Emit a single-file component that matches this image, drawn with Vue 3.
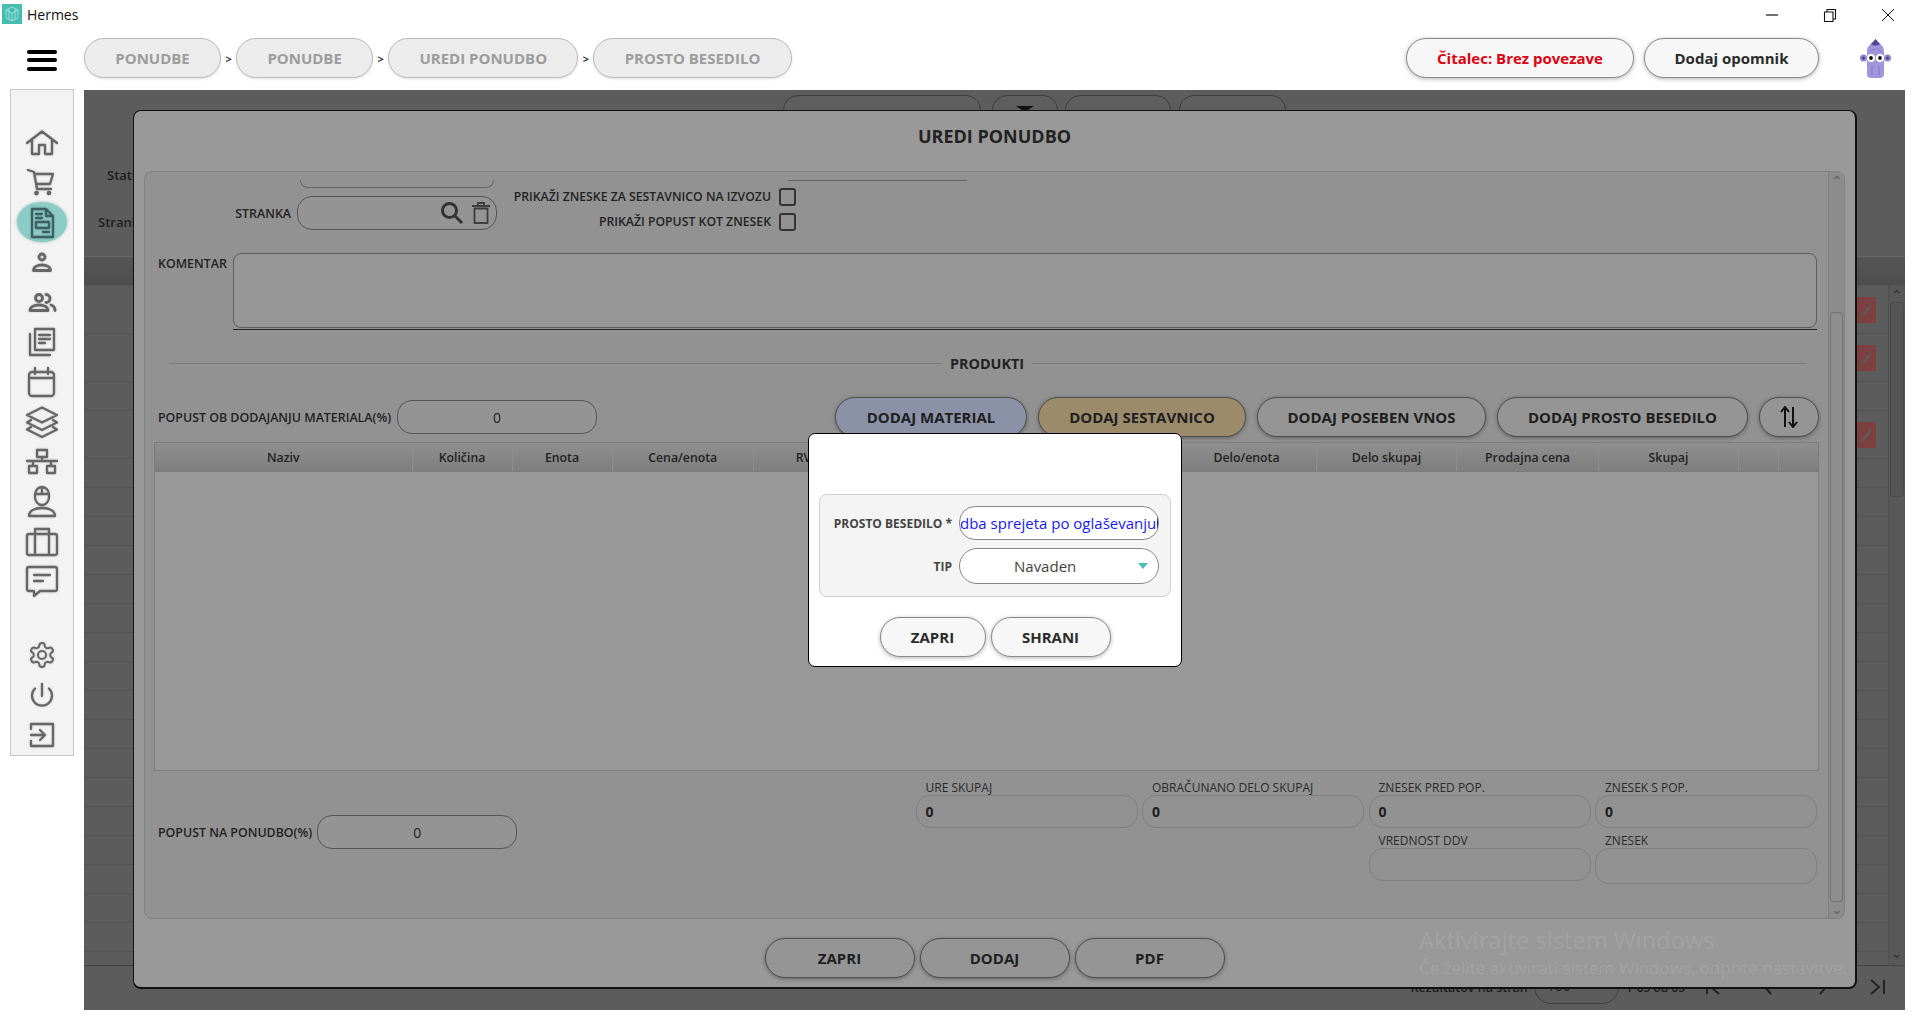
<script setup>
const c = (x, y, r) => `M${x - r} ${y}a${r} ${r} 0 1 0 ${2 * r} 0a${r} ${r} 0 1 0 ${-2 * r} 0z`
const gear = 'M12.22 2h-.44a2 2 0 0 0-2 2v.18a2 2 0 0 1-1 1.73l-.43.25a2 2 0 0 1-2 0l-.15-.08a2 2 0 0 0-2.73.73l-.22.38a2 2 0 0 0 .73 2.73l.15.1a2 2 0 0 1 1 1.72v.51a2 2 0 0 1-1 1.74l-.15.09a2 2 0 0 0-.73 2.73l.22.38a2 2 0 0 0 2.73.73l.15-.08a2 2 0 0 1 2 0l.43.25a2 2 0 0 1 1 1.73V20a2 2 0 0 0 2 2h.44a2 2 0 0 0 2-2v-.18a2 2 0 0 1 1-1.73l.43-.25a2 2 0 0 1 2 0l.15.08a2 2 0 0 0 2.73-.73l.22-.39a2 2 0 0 0-.73-2.73l-.15-.08a2 2 0 0 1-1-1.74v-.5a2 2 0 0 1 1-1.74l.15-.09a2 2 0 0 0 .73-2.73l-.22-.38a2 2 0 0 0-2.73-.73l-.15.08a2 2 0 0 1-2 0l-.43-.25a2 2 0 0 1-1-1.73V4a2 2 0 0 0-2-2z' + c(12, 12, 3.4)

const navTop = [
  { name: 'home', d: 'M10 21 25 9.5 40 21M15 18v14h7v-9h6v9h7V18' },
  { name: 'cart', d: 'M11 8l6 2 3 17h14M17.5 12H36l-3 10H19.5' + c(19.5, 31, 1.2) + c(32, 31, 1.2) },
  { name: 'doc', active: true, d: 'M15 7h14l7 7v21H15zM29 7v7h7M19 12h6M19 16h6M19 20h13v6H19zM26 30h6' },
  { name: 'user', heavy: true, d: c(25, 15, 3) + 'M16.500 28.500c0-3.500 4-5.500 8.500-5.500s8.500 2 8.500 5.500z' },
  { name: 'users', heavy: true, d: c(22, 16, 3.5) + 'M29 12.500a4 4 0 0 1 0 8M13 28.500c0-3.500 4-5.500 9-5.500s9 2 9 5.500zM34 23c2.600.8 4 3 4 5.500' },
  { name: 'docs', d: 'M18 7h19v21H18zM22 13h11M22 17h11M22 21h6M13 12v21h20' },
  { name: 'calendar', d: 'M15 10h19a3 3 0 0 1 3 3v18a3 3 0 0 1-3 3H15a3 3 0 0 1-3-3V13a3 3 0 0 1 3-3zM12 16h25M18 6v6M31 6v6' },
  { name: 'layers', d: 'M10 13 25 5.500 40 13l-15 7.500zM14 18l-4 2.500 15 7.500 15-7.500-4-2.500M14 25l-4 2.500 15 7.500 15-7.500-4-2.500' },
  { name: 'network', d: 'M20 8h10v7H20zM25 15v4M10 19h30M16 19v5M34 19v5M12 24h8v7h-8zM30 24h8v7h-8z' },
  { name: 'worker', d: 'M18 13a7 8 0 0 1 14 0v2a7 8 0 0 1-14 0zM18 12h14M25 5v7M12 34c0-5 5-8 13-8s13 3 13 8z' },
  { name: 'case', d: 'M12 12h26a2 2 0 0 1 2 2v17a2 2 0 0 1-2 2H12a2 2 0 0 1-2-2V14a2 2 0 0 1 2-2zM18 12V7h14v5M18 12v21M32 12v21' },
  { name: 'chat', d: 'M12 5h26a2 2 0 0 1 2 2v20a2 2 0 0 1-2 2H23l-6 5v-5h-5a2 2 0 0 1-2-2V7a2 2 0 0 1 2-2zM17 13h16M17 19h9' },
]
const navBottom = [
  { name: 'gear', d: gear, shift: true },
  { name: 'power', d: 'M25 9v12M18 13.500a10 10 0 1 0 14 0' },
  { name: 'exit', d: 'M14 14V9h22v22H14v-5M14 20h14M23 15l5 5-5 5' },
]

const crumbs = ['PONUDBE', 'PONUDBE', 'UREDI PONUDBO', 'PROSTO BESEDILO']
const bgRows = [48, 48, 29, 48, ...Array(18).fill(29)]
const editRows = [0, 1, 3]
const columns = [
  { t: 'Naziv', w: 257.5 }, { t: 'Količina', w: 100 }, { t: 'Enota', w: 100 }, { t: 'Cena/enota', w: 141.5 },
  { t: 'RV', w: 100 }, { t: '', w: 163 }, { t: '', w: 160 }, { t: 'Delo/enota', w: 140 },
  { t: 'Delo skupaj', w: 140 }, { t: 'Prodajna cena', w: 142 }, { t: 'Skupaj', w: 140 }, { t: '', w: 40 }, { t: '', w: 41 },
]
const totals = [
  { label: 'URE SKUPAJ', value: '0' }, { label: 'OBRAČUNANO DELO SKUPAJ', value: '0' },
  { label: 'ZNESEK PRED POP.', value: '0' }, { label: 'ZNESEK S POP.', value: '0' },
  { label: '', value: null }, { label: '', value: null },
  { label: 'VREDNOST DDV', value: '' }, { label: 'ZNESEK', value: '' },
]
</script>

<template>
  <div class="app">
    <header class="titlebar">
      <svg class="app-icon" viewBox="0 0 20 20">
        <rect width="20" height="20" fill="#45bdb3" />
        <path d="M10 3l6 3v8l-6 3-6-3V6zM4 6l6 3 6-3M10 9v8M7 5v10M13 5v10" fill="none" stroke="#a8e2dc" stroke-width=".9" />
      </svg>
      <span class="app-name">Hermes</span>
      <div class="win-controls">
        <span class="win-btn"><svg width="14" height="14" viewBox="0 0 14 14"><path d="M1 7h12" stroke="#111" stroke-width="1.200" /></svg></span>
        <span class="win-btn"><svg width="14" height="14" viewBox="0 0 14 14"><path d="M1.500 4h8.500v9.500H1.500zM4 4V1.500h8.500V11H10" fill="none" stroke="#111" stroke-width="1.100" /></svg></span>
        <span class="win-btn"><svg width="14" height="14" viewBox="0 0 14 14"><path d="M1 1l12 12M13 1 1 13" stroke="#111" stroke-width="1" /></svg></span>
      </div>
    </header>

    <div class="topbar">
      <div class="hamburger"><i></i><i></i><i></i></div>
      <nav class="crumbs">
        <template v-for="(item, i) in crumbs" :key="i">
          <span v-if="i" class="crumb-sep">&gt;</span>
          <span class="crumb">{{ item }}</span>
        </template>
      </nav>
      <div class="top-actions">
        <button class="pill reader">Čitalec: Brez povezave</button>
        <button class="pill reminder">Dodaj opomnik</button>
        <svg class="mascot" viewBox="0 0 33 40">
          <circle cx="3.500" cy="20" r="3.500" fill="#8d80cc" />
          <circle cx="27.500" cy="20" r="3.500" fill="#8d80cc" />
          <circle cx="3.500" cy="20" r="1.200" fill="#3e3470" />
          <circle cx="27.500" cy="20" r="1.200" fill="#3e3470" />
          <path d="M7 13C7 8 12 5 15.500 1 19 5 24 8 24 13v23a4 4 0 0 1-4 4h-9a4 4 0 0 1-4-4z" fill="#a195dc" />
          <path d="M11 6.500 15.500 1 20 6.500c-3 1.500-6 1.500-9 0z" fill="#564a96" />
          <path d="M10 13l5-2M17 10l4 4M12 28v9M19 28v9" stroke="#7d70bd" stroke-width=".8" fill="none" />
          <circle cx="11" cy="20" r="4" fill="#fff" />
          <circle cx="20" cy="20" r="4" fill="#fff" />
          <circle cx="11" cy="20" r="1.900" fill="#111" />
          <circle cx="20" cy="20" r="1.900" fill="#111" />
        </svg>
      </div>
    </div>

    <div class="workspace">
      <aside class="sidebar">
        <div class="nav-group">
          <div v-for="icon in navTop" :key="icon.name" class="nav-item" :class="{ active: icon.active, heavy: icon.heavy }">
            <svg viewBox="0 0 50 40" width="50" height="40"><path :d="icon.d" /></svg>
          </div>
        </div>
        <div class="nav-group bottom">
          <div v-for="icon in navBottom" :key="icon.name" class="nav-item">
            <svg viewBox="0 0 50 40" width="50" height="40"><path :d="icon.d" :class="{ gear: icon.shift }" /></svg>
          </div>
        </div>
      </aside>

      <main class="page">
        <div class="bg-filters">
          <div class="bg-buttons">
            <span class="bg-btn w-search"></span>
            <span class="bg-btn w-tri"><i></i></span>
            <span class="bg-btn w-a"></span>
            <span class="bg-btn w-b"></span>
          </div>
          <div class="bg-label first">Status</div>
          <div class="bg-label second">Stranka</div>
        </div>
        <div class="bg-table">
          <div class="bg-head"></div>
          <div class="bg-body">
            <div class="bg-rows">
              <div v-for="(h, i) in bgRows" :key="i" class="bg-row" :style="{ height: h + 'px' }">
                <span v-if="editRows.includes(i)" class="bg-edit">
                  <svg width="20" height="26" viewBox="0 0 20 26"><path d="M6 17l8-10 2 2-8 10-3 1z" fill="#5c5c5c" opacity=".8" /></svg>
                </span>
              </div>
            </div>
            <div class="bg-scroll">
              <span class="arrow">⌃</span>
              <span class="bg-thumb"></span>
              <span class="arrow down">⌄</span>
            </div>
          </div>
        </div>
        <div class="bg-footer">
          <span class="bg-text">Rezultatov na stran</span>
          <span class="bg-select">100<i></i></span>
          <span class="bg-text pages">1-65 od 65</span>
          <span class="bg-nav"><svg width="16" height="16" viewBox="0 0 16 16"><path d="M2 1v14M14 1 6 8l8 7" /></svg></span>
          <span class="bg-nav"><svg width="10" height="16" viewBox="0 0 10 16"><path d="M8 1 2 8l6 7" /></svg></span>
          <span class="bg-nav"><svg width="10" height="16" viewBox="0 0 10 16"><path d="M2 1l6 7-6 7" /></svg></span>
          <span class="bg-nav"><svg width="16" height="16" viewBox="0 0 16 16"><path d="M1 1l8 7-8 7M14 1v14" /></svg></span>
        </div>

        <section class="modal-edit">
          <h2 class="modal-title">UREDI PONUDBO</h2>
          <div class="panel">
            <div class="panel-body">
              <div class="stub-row"><span class="stub"></span><span class="stub-line"></span></div>
              <div class="customer-row">
                <div class="customer">
                  <label class="lbl customer-lbl">STRANKA</label>
                  <div class="field customer-field">
                    <svg width="24" height="24" viewBox="0 0 24 24" class="search"><circle cx="9.500" cy="9.500" r="7" /><path d="M14.500 14.500 22 22" /></svg>
                    <svg width="18" height="22" viewBox="0 0 18 22" class="trash"><path d="M0 4h18M6 3V1h6v2M2.500 6.500h13V21h-13z" /></svg>
                  </div>
                </div>
                <div class="checks">
                  <div class="check-row"><span class="lbl">PRIKAŽI ZNESKE ZA SESTAVNICO NA IZVOZU</span><span class="check"></span></div>
                  <div class="check-row"><span class="lbl">PRIKAŽI POPUST KOT ZNESEK</span><span class="check"></span></div>
                </div>
              </div>
              <div class="comment-row">
                <label class="lbl comment-lbl">KOMENTAR</label>
                <div class="comment-wrap"><div class="comment"></div></div>
              </div>
              <div class="divider"><i></i><span>PRODUKTI</span><i></i></div>
              <div class="actions-row">
                <label class="lbl">POPUST OB DODAJANJU MATERIALA(%)</label>
                <div class="field num">0</div>
                <div class="actions">
                  <button class="dim-btn blue">DODAJ MATERIAL</button>
                  <button class="dim-btn tan">DODAJ SESTAVNICO</button>
                  <button class="dim-btn special">DODAJ POSEBEN VNOS</button>
                  <button class="dim-btn plain">DODAJ PROSTO BESEDILO</button>
                  <button class="dim-btn sort">
                    <svg width="18" height="22" viewBox="0 0 18 22"><path d="M5 21V2M1 6l4-5 4 5M13 1v19M9 16l4 5 4-5" /></svg>
                  </button>
                </div>
              </div>
              <div class="products">
                <div class="products-head">
                  <span v-for="(col, i) in columns" :key="i" class="th" :style="{ width: col.w + 'px' }">{{ col.t }}</span>
                </div>
                <div class="products-body"></div>
              </div>
              <div class="summary-row">
                <div class="discount">
                  <label class="lbl">POPUST NA PONUDBO(%)</label>
                  <div class="field num">0</div>
                </div>
                <div class="totals">
                  <div v-for="(t, i) in totals" :key="i" class="total" :class="{ tall: i === 7 }">
                    <template v-if="t.value !== null">
                      <span class="total-lbl">{{ t.label }}</span>
                      <span class="total-val">{{ t.value }}</span>
                    </template>
                  </div>
                </div>
              </div>
            </div>
            <div class="panel-scroll">
              <span class="arrow">⌃</span>
              <span class="panel-thumb"></span>
              <span class="arrow down">⌄</span>
            </div>
          </div>
          <div class="modal-footer">
            <button class="dim-btn foot">ZAPRI</button>
            <button class="dim-btn foot">DODAJ</button>
            <button class="dim-btn foot">PDF</button>
          </div>
        </section>

        <section class="modal-text">
          <div class="text-panel">
            <label class="lbl dark">PROSTO BESEDILO *</label>
            <div class="text-input"><span>dba sprejeta po oglaševanju</span><i></i></div>
            <label class="lbl dark">TIP</label>
            <div class="text-select"><span>Navaden</span><i></i></div>
          </div>
          <div class="text-actions">
            <button class="pill close">ZAPRI</button>
            <button class="pill save">SHRANI</button>
          </div>
        </section>

        <div class="watermark">
          <p class="wm-title">Aktivirajte sistem Windows</p>
          <p class="wm-sub">Če želite aktivirati sistem Windows, odprite nastavitve.</p>
        </div>
      </main>
    </div>
  </div>
</template>

<style>
html, body { margin: 0; background: #fff; }
</style>

<style scoped>
* { box-sizing: border-box; }
.app {
  width: 1917px; height: 1030px; background: #fff; overflow: hidden;
  font-family: "Open Sans", "Noto Sans", sans-serif; color: #222;
  display: flex; flex-direction: column;
}
button { font-family: inherit; cursor: pointer; padding: 0; }
p, h2 { margin: 0; }

.titlebar { height: 30px; flex: none; display: flex; align-items: center; padding-left: 2px; }
.app-icon { width: 20px; height: 20px; margin-top: -2px; }
.app-name { margin-left: 5px; font-size: 14px; color: #111; margin-top: -2px; }
.win-controls { margin-left: auto; display: flex; }
.win-btn { width: 58px; height: 30px; display: flex; align-items: center; justify-content: center; }

.topbar { height: 60px; flex: none; display: flex; align-items: center; padding: 0 24px 4px 27px; }
.hamburger { width: 30px; display: flex; flex-direction: column; gap: 4.500px; margin-right: 27px; margin-top: 4px; }
.hamburger i { display: block; height: 4px; background: #000; border-radius: 2px; }
.crumbs { display: flex; align-items: center; }
.crumb {
  height: 40px; padding: 0 30.300px; display: flex; align-items: center;
  border: 1px solid #bcbcbc; border-radius: 20px; background: #ececec;
  font-size: 15px; font-weight: 700; color: #9c9c9c; box-shadow: 0 1px 3px rgba(0,0,0,.12);
}
.crumb-sep { width: 15px; text-align: center; font-size: 11px; font-weight: 700; color: #333; }
.top-actions { margin-left: auto; display: flex; align-items: center; }
.pill {
  height: 40px; border: 1px solid #8a8a8a; border-radius: 20px; background: #f7f7f7;
  font-size: 15px; font-weight: 700; color: #2b2b2b; box-shadow: 0 1px 4px rgba(0,0,0,.3);
}
.reader { width: 228px; color: #dc0010; margin-right: 10px; }
.reminder { width: 175px; }
.mascot { width: 33px; height: 40px; margin-left: 41px; }

.workspace { flex: 1; display: flex; align-items: flex-start; }
.sidebar {
  width: 64px; height: 667px; margin-left: 10px; margin-top: -1px; flex: none;
  background: #f3f3f3; border: 1px solid #c8c8c8; padding-top: 32px;
  display: flex; flex-direction: column;
}
.nav-group.bottom { margin-top: 33px; }
.nav-item { height: 40px; width: 50px; margin-left: 6px; display: flex; border-radius: 50%; }
.nav-item svg { fill: none; stroke: #666; stroke-width: 2.300; stroke-linejoin: round; stroke-linecap: round; filter: drop-shadow(0 0 1px rgba(0,0,0,.18)); }
.nav-item.heavy svg { stroke-width: 2.800; }
.nav-item .gear { transform: translate(10.600px, 5.600px) scale(1.200); stroke-width: 1.700; }
.nav-item.active { background: #8ccbc6; box-shadow: 0 0 3px rgba(80,150,145,.6); }
.nav-item.active svg { stroke: #3c5f5f; }

.page {
  position: relative; width: 1821px; height: 920px; margin-left: 10px; flex: none;
  background: #5c5c5c; display: flex; flex-direction: column; overflow: hidden;
}
.bg-filters { height: 166px; flex: none; padding-top: 5px; display: flex; flex-direction: column; }
.bg-buttons { display: flex; margin-left: 699px; gap: 9px; height: 30px; }
.bg-btn { display: block; height: 30px; border: 1px solid #3e3e3e; border-radius: 18px; background: #5e5e5e; }
.w-search { width: 198px; }
.w-tri { width: 66px; margin-left: 2px; display: flex; justify-content: center; padding-top: 10px; }
.w-tri i { width: 0; height: 0; border: 9px solid transparent; border-top: 6px solid #111; border-bottom: 0; }
.w-a { width: 106px; margin-left: -2px; }
.w-b { width: 107px; margin-left: -1px; }
.bg-label { font-size: 13px; font-weight: 600; color: #1e1e1e; line-height: 18px; }
.first { margin: 41px 0 0 23px; }
.second { margin: 29px 0 0 14px; }

.bg-table { height: 709px; flex: none; display: flex; flex-direction: column; }
.bg-head { height: 30px; flex: none; border-top: 1px solid #666; background: linear-gradient(#555, #4e4e4e); border-bottom: 1px solid #555; }
.bg-body { flex: 1; min-height: 0; display: flex; }
.bg-rows { flex: 1; overflow: hidden; }
.bg-row { display: flex; justify-content: flex-end; align-items: center; padding-right: 12px; border-bottom: 1px solid #545454; }
.bg-edit { width: 20px; height: 26px; background: #7d4040; border-radius: 2px; }
.bg-scroll { width: 17px; flex: none; background: #585858; border-left: 1px solid #515151; display: flex; flex-direction: column; align-items: center; }
.bg-thumb { width: 14px; height: 195px; background: #555; border: 1px solid #4a4a4a; border-radius: 3px; }
.arrow { height: 16px; line-height: 18px; font-size: 14px; color: #333; flex: none; }
.arrow.down { margin-top: auto; line-height: 8px; }
.bg-footer { flex: 1; border-top: 1px solid #444; display: flex; align-items: center; justify-content: flex-end; padding-bottom: 2px; }
.bg-text { font-size: 12.500px; font-weight: 600; color: #1c1c1c; white-space: nowrap; }
.bg-text.pages { font-size: 12px; }
.bg-select { width: 85px; height: 34px; margin: 0 7px 0 6px; border: 1px solid #3e3e3e; border-radius: 18px; padding-left: 12px; font-size: 14px; line-height: 30px; color: #222; display: flex; justify-content: space-between; }
.bg-select i { width: 4px; height: 4px; margin: 14px 14px 0 0; background: #2a6a66; }
.bg-nav { width: 55px; display: flex; justify-content: center; flex: none; }
.bg-nav svg { fill: none; stroke: #222; stroke-width: 2; }

.modal-edit {
  position: absolute; left: 49px; top: 20px; width: 1724px; height: 879px;
  background: #999; border: 1px solid #111; border-width: 1px 2px 2px 1px; border-radius: 8px;
  display: flex; flex-direction: column;
}
.modal-title { height: 60px; flex: none; font-size: 18px; font-weight: 700; line-height: 50px; text-align: center; color: #222; }
.panel {
  height: 748px; margin: 0 10px; flex: none; display: flex;
  border: 1px solid #808080; border-radius: 8px; background: #929292; overflow: hidden;
}
.panel-body { flex: 1; min-width: 0; padding-top: 8px; }
.panel-scroll { width: 16px; flex: none; background: #8c8c8c; border-left: 1px solid #7e7e7e; display: flex; flex-direction: column; align-items: center; padding: 0; }
.panel-thumb { width: 13px; height: 592px; margin-top: 124px; background: #8e8e8e; border: 1px solid #727272; border-radius: 3px; }
.panel-scroll .arrow { color: #666; }
.panel-scroll .arrow.down { margin-top: 0; line-height: 14px; }

.lbl { font-size: 12.400px; font-weight: 600; color: #222; white-space: nowrap; }
.stub-row { display: flex; height: 8px; }
.stub { width: 194px; height: 8px; margin-left: 155px; border: 1px solid #666; border-top: 0; border-radius: 0 0 14px 14px; }
.stub-line { width: 179px; height: 1px; margin-left: 294px; background: #666; }
.customer-row { display: flex; height: 45px; align-items: flex-start; }
.customer { display: flex; align-items: center; margin-top: 8px; }
.customer-lbl { width: 146px; text-align: right; margin-right: 6px; }
.field { border: 1px solid #555; border-radius: 15px; background: #949494; height: 34px; width: 200px; display: flex; align-items: center; }
.customer-field { justify-content: flex-end; padding-right: 6px; gap: 8px; }
.search { width: 24px; height: 24px; fill: none; stroke: #333; stroke-width: 3; }
.trash { fill: none; stroke: #3e3e3e; stroke-width: 1.800; }
.checks { width: 299px; margin-top: -4px; }
.check-row { height: 25px; display: flex; align-items: center; justify-content: flex-end; gap: 8px; }
.check-row .lbl { font-size: 12.250px; }
.check { width: 17px; height: 18px; border: 2px solid #333; border-radius: 3px; flex: none; }

.comment-row { display: flex; margin-top: 20px; padding-left: 13px; }
.comment-lbl { width: 75px; line-height: 22px; }
.comment-wrap { width: 1584px; height: 77px; border-bottom: 1.500px solid #222; }
.comment { height: 75px; border: 1px solid #5e5e5e; border-radius: 8px; background: #969696; }
.divider { display: flex; align-items: center; height: 20px; margin: 23px 0 0 24px; width: 1636px; gap: 8px; }
.divider i { flex: 1; height: 1px; background: #7c7c7c; }
.divider span { font-size: 14.400px; font-weight: 700; color: #222; }
.actions-row { display: flex; align-items: center; margin-top: 24px; padding: 0 9px 0 13px; height: 40px; }
.actions-row > .lbl { margin-right: 6px; }
.num { justify-content: center; font-size: 14px; color: #222; }
.actions { margin-left: auto; display: flex; gap: 11px; }
.dim-btn {
  height: 40px; border: 1px solid #4e4e4e; border-radius: 20px; background: #959595;
  font-size: 15px; font-weight: 700; color: #1e1e1e; box-shadow: 0 1px 4px rgba(0,0,0,.35);
}
.blue { width: 192px; background: #8b92a8; }
.tan { width: 208px; background: #9b8b6b; }
.special { width: 229px; }
.plain { width: 251px; }
.sort { width: 60px; display: flex; align-items: center; justify-content: center; }
.sort svg { fill: none; stroke: #111; stroke-width: 2; }

.products { margin: 5px 9px 0 9px; }
.products-head { height: 30px; display: flex; background: linear-gradient(#8f8f8f, #7e7e7e); border: 1px solid #7c7c7c; }
.th { flex: none; display: flex; align-items: center; justify-content: center; font-size: 12.300px; font-weight: 600; color: #222; border-right: 1px solid #8e8e8e; }
.products-body { height: 299px; background: #989898; border: 1px solid #808080; border-top: 0; }

.summary-row { display: flex; padding: 0 11px 0 13px; }
.discount { display: flex; align-items: center; height: 34px; margin-top: 44px; }
.discount .lbl { margin-right: 5px; }
.totals { margin: 9px 0 0 auto; display: grid; grid-template-columns: repeat(4, 222px); column-gap: 4.500px; }
.total { display: flex; flex-direction: column; }
.total-lbl { height: 15px; line-height: 15px; padding-left: 10px; font-size: 12px; color: #2a2a2a; }
.total-val { height: 33px; padding-left: 9px; line-height: 32px; font-size: 14px; font-weight: 700; color: #1e1e1e; border: 1px solid #808080; border-radius: 14px; background: #929292; margin-bottom: 5px; }
.total.tall .total-val { height: 36px; }
.modal-footer { display: flex; justify-content: center; gap: 5px; padding: 19px 0 0; }
.foot { width: 150px; }

.modal-text {
  position: absolute; left: 724px; top: 343px; width: 374px; height: 234px;
  background: #fff; border: 1px solid #000; border-radius: 7px;
  padding: 60px 10px 0; display: flex; flex-direction: column;
}
.text-panel {
  height: 103px; background: #f4f4f4; border: 1px solid #d0d0d0; border-radius: 8px;
  display: grid; grid-template-columns: 132px 200px; grid-template-rows: 34px 36px; column-gap: 7px; row-gap: 8px;
  padding-top: 11px; align-items: center;
}
.dark { text-align: right; color: #444; font-weight: 700; font-size: 12px; }
.text-input {
  height: 34px; background: #fff; border: 1px solid #888; border-radius: 16px; overflow: hidden;
  display: flex; align-items: center; font-size: 15px; color: #1a1aff; white-space: nowrap;
}
.text-input span { flex: none; }
.text-input i { width: 1px; height: 30px; background: #1212a8; margin-left: 1px; flex: none; }
.text-select {
  height: 36px; background: #fff; border: 1px solid #888; border-radius: 18px; font-size: 15px; color: #444;
  display: flex; align-items: center; justify-content: space-between; padding: 0 10px 0 54px;
}
.text-select i { width: 0; height: 0; border: 5px solid transparent; border-top: 6px solid #4dbfb5; border-bottom: 0; }
.text-actions { display: flex; justify-content: center; gap: 5px; margin-top: 20px; }
.close { width: 106px; }
.save { width: 120px; }

.watermark { position: absolute; left: 1335px; top: 832px; color: rgba(255,255,255,.1); pointer-events: none; white-space: nowrap; }
.wm-title { font-size: 23.700px; line-height: 36px; }
.wm-sub { font-size: 17px; line-height: 22px; margin-top: -1px; }
</style>
